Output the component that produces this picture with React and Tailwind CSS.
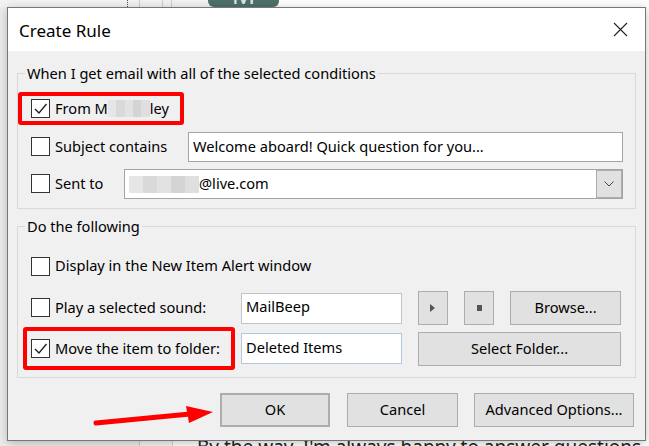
import React from 'react';

const font = "font-['Noto_Sans',sans-serif]";

function CheckBox({ checked }) {
  return (
    <div className="w-[19px] h-[19px] border border-[#333333] bg-white flex items-center justify-center shrink-0">
      {checked && (
        <svg width="15" height="15" viewBox="0 0 15 15">
          <polyline points="2,8 6,12 13.5,3" fill="none" stroke="#222" strokeWidth="1.4" />
        </svg>
      )}
    </div>
  );
}

function Blur({ width }) {
  // pixelated placeholder for the redacted part of a name / address
  return (
    <span className="inline-flex h-[17px] align-middle" style={{ width }}>
      <span className="flex-1 bg-[#e6e6e6]" />
      <span className="flex-1 bg-[#d9d9d9]" />
      <span className="flex-1 bg-[#e2e2e2]" />
      <span className="flex-1 bg-[#d4d4d4]" />
      <span className="flex-1 bg-[#dfdfdf]" />
    </span>
  );
}

function WinButton({ children, className = '' }) {
  return (
    <button className={`h-[34px] bg-[#e1e1e1] border border-[#adadad] text-[14.6px] text-black flex items-center justify-center ${className}`}>
      {children}
    </button>
  );
}

export default function App() {
  return (
    <div className={`relative w-[649px] h-[446px] overflow-hidden bg-white ${font}`}>
      {/* background: the mail window behind the dialog */}
      <div className="flex flex-col h-full">
        <div className="flex h-[7px] bg-[#f3f3f3]">
          <div className="w-[128px] border-r border-dotted border-[#555]" />
          <div className="w-[12px] border-r border-[#cfcfcf]" />
          <div className="w-[23px] border-r border-[#cfcfcf]" />
          <div className="w-[9px] border-r border-[#cfcfcf]" />
          <div className="w-[36px]" />
          <div className="w-[71px] bg-[#4d7169] rounded-b-[6px] overflow-hidden flex items-end justify-center">
            <span className="text-[26px] leading-[30px] text-[#dfe8e6] -mb-[2px]">M</span>
          </div>
          <div className="flex-1 bg-white" />
        </div>
        <div className="flex-1 flex">
          <div className="w-[140px] bg-[#eeeeee] border-r border-[#d0d0d0]" />
          <div className="w-[33px] bg-[#f6f6f6] border-r border-[#d6d6d6]" />
          <div className="flex-1 flex flex-col justify-end pl-[24px]">
            <div className="whitespace-nowrap text-[19px] leading-[22px] text-[#222] -mb-[12px]">
              By the way, I'm always happy to answer questions
            </div>
          </div>
        </div>
      </div>

      {/* dialog window */}
      <div className="absolute left-[7px] top-[7px] w-[639px] h-[434px] border border-[#767676] bg-[#f0f0f0] shadow-[0_2px_10px_rgba(0,0,0,0.25)] flex flex-col text-black">
        <div className="h-[43px] bg-white flex items-center justify-between pl-[11px] pr-[17px]">
          <span className="text-[17px] leading-none pt-[1px]">Create Rule</span>
          <svg width="15" height="15" viewBox="0 0 15 15">
            <path d="M1 1 L14 14 M14 1 L1 14" stroke="#222" strokeWidth="1.1" />
          </svg>
        </div>

        <div className="flex-1 flex flex-col px-[9px] pt-[11px] text-[14.6px]">
          {/* conditions group */}
          <fieldset className="border border-[#d9d9d9] pb-[9px]">
            <legend className="ml-[7px] px-[2px] leading-[22px]">When I get email with all of the selected conditions</legend>
            <div className="flex mt-[8px]">
              <div className="h-[33px] w-[166px] border-[4px] border-[#ff0000] rounded-[3px] flex items-center pl-[9px]">
                <CheckBox checked />
                <span className="ml-[5px] whitespace-nowrap flex items-center">
                  From M<Blur width={42} />ley
                </span>
              </div>
            </div>
            <div className="flex items-center h-[30px] mt-[7px] pl-[13px] pr-[12px]">
              <div className="w-[157px] flex items-center">
                <CheckBox />
                <span className="ml-[5px]">Subject contains</span>
              </div>
              <div className="flex-1 h-full bg-white border border-[#a5a5a5] flex items-center pl-[4px]">
                Welcome aboard! Quick question for you...
              </div>
            </div>
            <div className="flex items-center h-[30px] mt-[7px] pl-[13px] pr-[12px]">
              <div className="w-[93px] flex items-center">
                <CheckBox />
                <span className="ml-[5px]">Sent to</span>
              </div>
              <div className="flex-1 h-full bg-white border border-[#a5a5a5] flex items-center pl-[4px]">
                <Blur width={70} />
                <span>@live.com</span>
                <div className="ml-auto h-full w-[26px] bg-[#e1e1e1] border border-[#adadad] flex items-center justify-center">
                  <svg width="10" height="6" viewBox="0 0 10 6">
                    <polyline points="0.5,0.5 5,5 9.5,0.5" fill="none" stroke="#444" strokeWidth="1" />
                  </svg>
                </div>
              </div>
            </div>
          </fieldset>

          {/* actions group */}
          <fieldset className="border border-[#d9d9d9] mt-[6px] pb-[7px]">
            <legend className="ml-[7px] px-[2px] leading-[22px]">Do the following</legend>
            <div className="flex items-center h-[20px] mt-[19px] pl-[13px]">
              <CheckBox />
              <span className="ml-[5px]">Display in the New Item Alert window</span>
            </div>
            <div className="flex items-center h-[34px] mt-[15px] pl-[13px]">
              <div className="w-[210px] flex items-center">
                <CheckBox />
                <span className="ml-[5px]">Play a selected sound:</span>
              </div>
              <div className="w-[161px] h-[31px] bg-white border border-[#c3c3c3] flex items-center pl-[4px] pb-[2px]">
                MailBeep
              </div>
              <WinButton className="w-[30px] ml-[16px]">
                <svg width="6" height="8" viewBox="0 0 6 8">
                  <polygon points="0,0 5,4 0,8" fill="#555" />
                </svg>
              </WinButton>
              <WinButton className="w-[30px] ml-[16px]">
                <span className="w-[5px] h-[6px] bg-[#555]" />
              </WinButton>
              <WinButton className="w-[111px] ml-[16px]">Browse...</WinButton>
            </div>
            <div className="flex items-center h-[43px] mt-[2px] pl-[5px]">
              <div className="w-[212px] h-full border-[4px] border-[#ff0000] rounded-[3px] flex items-center pl-[4px]">
                <CheckBox checked />
                <span className="ml-[5px] whitespace-nowrap">Move the item to folder:</span>
              </div>
              <div className="w-[161px] h-[31px] ml-[6px] bg-white border border-[#b4c6da] flex items-center pl-[4px] pb-[2px]">
                Deleted Items
              </div>
              <WinButton className="w-[203px] ml-[16px]">Select Folder...</WinButton>
            </div>
          </fieldset>

          {/* dialog buttons */}
          <div className="flex justify-end mt-[15px] pr-[2px]">
            <WinButton className="w-[110px] border-2 border-[#0078d7]">OK</WinButton>
            <WinButton className="w-[111px] ml-[17px]">Cancel</WinButton>
            <WinButton className="w-[160px] ml-[16px]">Advanced Options...</WinButton>
          </div>
        </div>
      </div>

      {/* red annotation arrow */}
      <svg className="absolute left-[90px] top-[400px]" width="130" height="30" viewBox="0 0 130 30">
        <line x1="6" y1="23" x2="100" y2="14" stroke="#ff0000" strokeWidth="5" strokeLinecap="round" />
        <polygon points="96,6 123,12 99,23" fill="#ff0000" />
      </svg>
    </div>
  );
}
